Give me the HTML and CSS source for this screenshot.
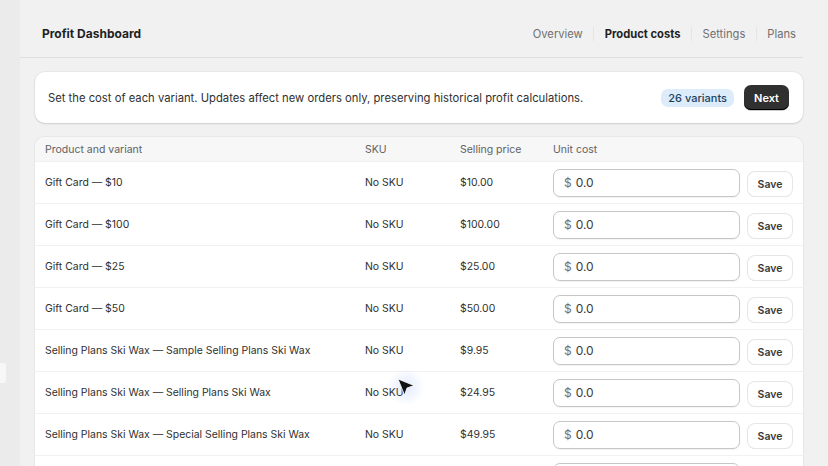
FILE: index.html
```html
<!DOCTYPE html>
<html lang="en">
<head>
    <meta charset="UTF-8">
    <title>Profit Dashboard</title>
    <link rel="stylesheet" href="styles.css">
</head>
<body>
    <div class="rail"><span class="rail-tab"></span></div>
    <div class="app">
        <header class="topbar">
            <h1>Profit Dashboard</h1>
            <nav class="tabs">
                <a>Overview</a>
                <a class="active">Product costs</a>
                <a>Settings</a>
                <a>Plans</a>
            </nav>
        </header>

        <section class="banner">
            <p>Set the cost of each variant. Updates affect new orders only, preserving historical profit calculations.</p>
            <span class="badge">26 variants</span>
            <button class="btn-dark">Next</button>
        </section>

        <section class="table-card">
            <div class="row head">
                <span>Product and variant</span>
                <span>SKU</span>
                <span>Selling price</span>
                <span>Unit cost</span>
            </div>
            <div class="row">
                <span>Gift Card — $10</span><span>No SKU</span><span>$10.00</span>
                <div class="cost"><label class="field"><i>$</i>0.0</label><button class="btn-save">Save</button></div>
            </div>
            <div class="row">
                <span>Gift Card — $100</span><span>No SKU</span><span>$100.00</span>
                <div class="cost"><label class="field"><i>$</i>0.0</label><button class="btn-save">Save</button></div>
            </div>
            <div class="row">
                <span>Gift Card — $25</span><span>No SKU</span><span>$25.00</span>
                <div class="cost"><label class="field"><i>$</i>0.0</label><button class="btn-save">Save</button></div>
            </div>
            <div class="row">
                <span>Gift Card — $50</span><span>No SKU</span><span>$50.00</span>
                <div class="cost"><label class="field"><i>$</i>0.0</label><button class="btn-save">Save</button></div>
            </div>
            <div class="row">
                <span>Selling Plans Ski Wax — Sample Selling Plans Ski Wax</span><span>No SKU</span><span>$9.95</span>
                <div class="cost"><label class="field"><i>$</i>0.0</label><button class="btn-save">Save</button></div>
            </div>
            <div class="row">
                <span>Selling Plans Ski Wax — Selling Plans Ski Wax</span><span>No SKU</span><span>$24.95</span>
                <div class="cost"><label class="field"><i>$</i>0.0</label><button class="btn-save">Save</button></div>
            </div>
            <div class="row">
                <span>Selling Plans Ski Wax — Special Selling Plans Ski Wax</span><span>No SKU</span><span>$49.95</span>
                <div class="cost"><label class="field"><i>$</i>0.0</label><button class="btn-save">Save</button></div>
            </div>
            <div class="row">
                <span></span><span></span><span></span>
                <div class="cost"><label class="field"></label></div>
            </div>
        </section>
    </div>

    <!-- pointer captured in the recording -->
    <div class="cursor">
        <svg width="20" height="20" viewBox="0 0 20 20">
            <path d="M2 2 L18 8.5 L11 11 L8.5 18 Z" fill="#111" stroke="#fff" stroke-width="0.8" stroke-linejoin="round"/>
        </svg>
    </div>
</body>
</html>
```

FILE: styles.css
```css
body {
    margin: 0;
    font-family: 'Inter', 'Liberation Sans', sans-serif;
    color: #303030;
    background: #f1f1f1;
    display: flex;
    height: 466px;
    overflow: hidden;
}
.rail {
    width: 20px;
    flex: none;
    background: #ebebeb;
    position: relative;
}
.rail-tab {
    position: absolute;
    left: 0;
    top: 363px;
    width: 6px;
    height: 20px;
    background: #f7f7f7;
    border-radius: 0 3px 3px 0;
}
.app {
    width: 783px;
    flex: none;
}
.topbar {
    height: 58px;
    display: flex;
    align-items: center;
    justify-content: space-between;
    padding: 10px 7px 0 22px;
    border-bottom: 1px solid #dedede;
    box-sizing: border-box;
}
h1 {
    margin: 0;
    font-size: 12px;
    font-weight: 650;
    color: #1f1f1f;
}
.tabs {
    display: flex;
    align-items: center;
}
.tabs a {
    font-size: 11.2px;
    color: #707070;
    padding: 0 10.5px;
    border-left: 1px solid #e4e4e4;
    line-height: 14px;
}
.tabs a:first-child {
    border-left: none;
}
.tabs a:last-child {
    padding-right: 0;
}
.tabs a.active {
    color: #1f1f1f;
    font-weight: 650;
}
.banner {
    margin: 14px 0 0 15px;
    height: 51px;
    background: #fff;
    border-radius: 10px;
    box-shadow: 0 1px 2px rgba(0, 0, 0, 0.12), 0 0 0 1px rgba(0, 0, 0, 0.03);
    display: flex;
    align-items: center;
    padding: 0 14px 0 13px;
    box-sizing: border-box;
}
.banner p {
    margin: 0;
    flex: 1;
    font-size: 11.25px;
    color: #303030;
}
.badge {
    background: #dcecfa;
    color: #1d3f5c;
    font-size: 11px;
    font-weight: 500;
    padding: 2px 7px;
    border-radius: 7px;
    margin-right: 10px;
}
.btn-dark {
    font-family: inherit;
    background: #303030;
    color: #fff;
    border: none;
    font-size: 11px;
    font-weight: 600;
    height: 25px;
    padding: 0 10px;
    border-radius: 7px;
    box-shadow: inset 0 -1px 0 #000, 0 1px 0 rgba(0, 0, 0, 0.2);
}
.table-card {
    margin: 14px 0 0 15px;
    background: #fff;
    border-radius: 10px 10px 0 0;
    box-shadow: 0 0 0 1px rgba(0, 0, 0, 0.04);
    overflow: hidden;
}
.row {
    display: grid;
    grid-template-columns: 320px 95px 93px 1fr;
    align-items: center;
    height: 42px;
    box-sizing: border-box;
    padding: 0 10px;
    border-top: 1px solid #f1f1f1;
    font-size: 10.45px;
    color: #303030;
}
.row.head {
    height: 24px;
    border-top: none;
    background: #f7f7f7;
    color: #616161;
    font-size: 10.5px;
}
.cost {
    display: flex;
    align-items: center;
    gap: 8px;
}
.field {
    width: 187px;
    height: 28px;
    box-sizing: border-box;
    border: 1px solid #c6c6c6;
    border-radius: 7px;
    box-shadow: 0 1px 1px rgba(0, 0, 0, 0.05);
    display: flex;
    align-items: center;
    padding-left: 10px;
    font-size: 12px;
    color: #3a3a3a;
}
.field i {
    font-style: normal;
    color: #707070;
    margin-right: 4px;
}
.btn-save {
    font-family: inherit;
    background: #fff;
    border: none;
    border-radius: 7px;
    box-shadow: 0 0 0 1px #e6e6e6, 0 1px 1px rgba(0, 0, 0, 0.1);
    height: 24px;
    width: 44px;
    font-size: 10.5px;
    font-weight: 600;
    color: #3a3a3a;
    margin-top: 3px;
}
.cursor {
    position: absolute;
    left: 387px;
    top: 368px;
    width: 38px;
    height: 38px;
    border-radius: 50%;
    background: radial-gradient(circle, rgba(120, 160, 255, 0.22), rgba(120, 160, 255, 0) 70%);
    display: flex;
    align-items: center;
    justify-content: center;
}
```
